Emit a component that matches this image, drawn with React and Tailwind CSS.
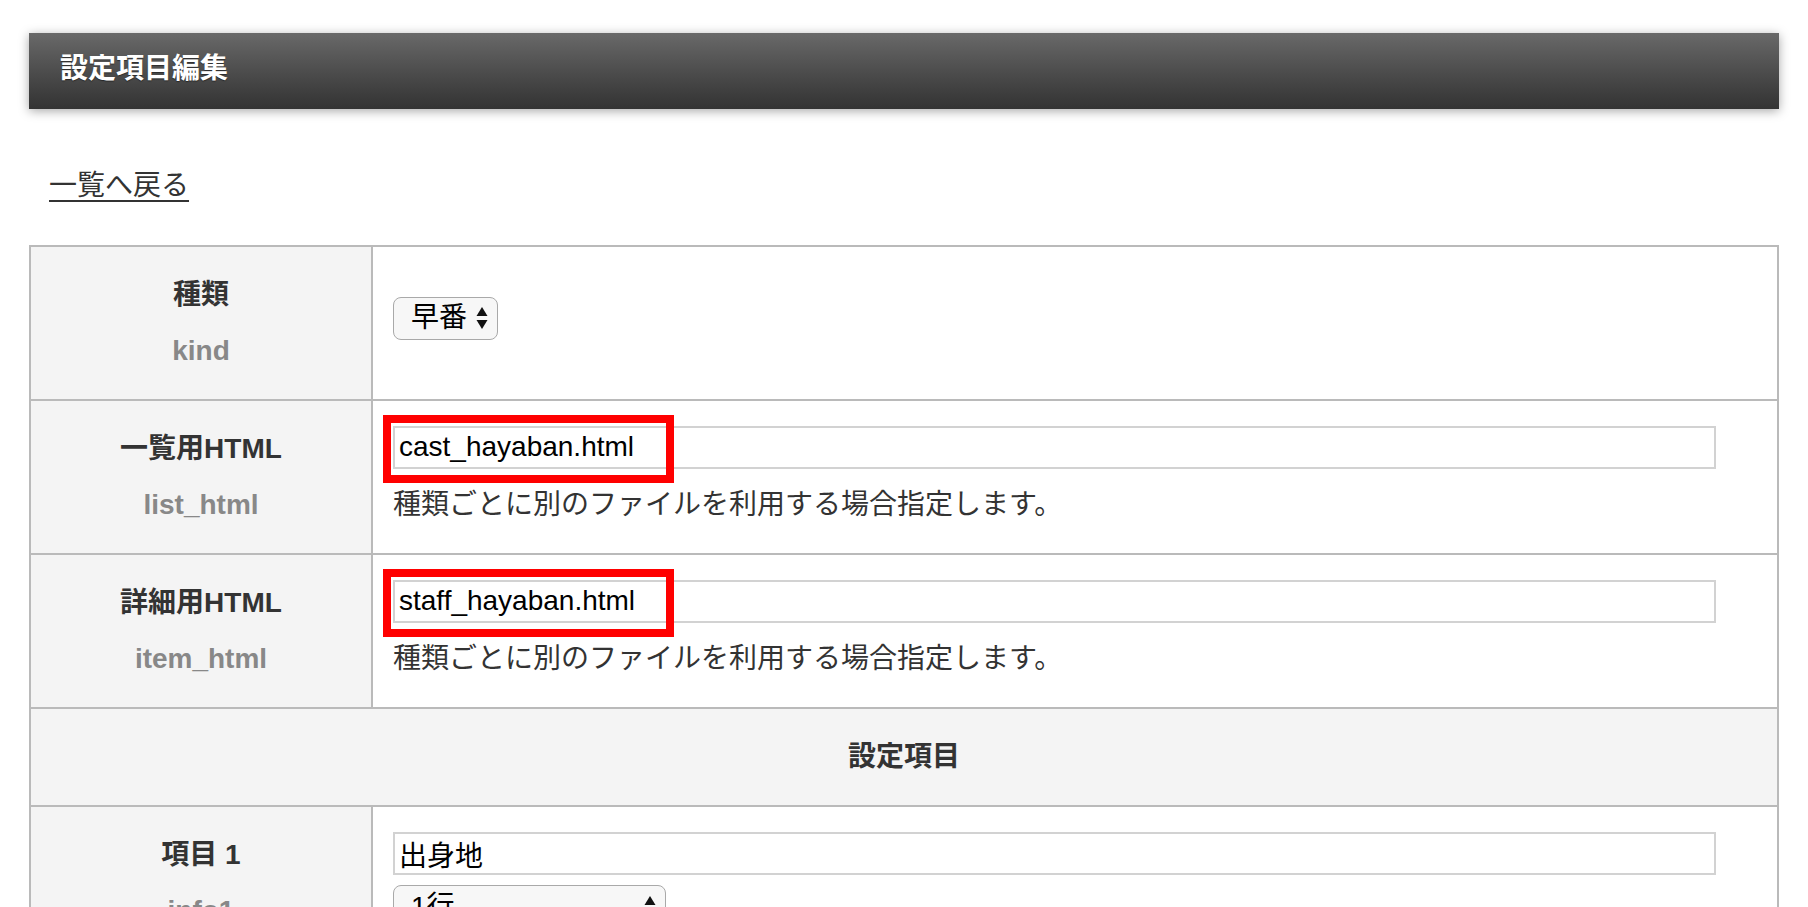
import React from 'react';

const Arrows = () => (
  <svg width="12" height="22" viewBox="0 0 12 22" className="shrink-0">
    <path d="M6 0 L11.5 9 L0.5 9 Z" fill="#111" />
    <path d="M6 22 L11.5 13 L0.5 13 Z" fill="#111" />
  </svg>
);

const FakeSelect = ({ value, width }) => (
  <div
    className={`inline-flex h-[43px] items-center justify-between rounded-[8px] border-[1.5px] border-[#a9a9a9] bg-[#f7f7f7] pl-[17px] pr-[9px] text-[28px] leading-none text-black ${width}`}
  >
    <span>{value}</span>
    <Arrows />
  </div>
);

const Label = ({ title, sub, top = false }) => (
  <td
    className={`w-[342px] border-2 border-[#bababa] bg-[#f4f4f4] py-[20px] text-center text-[28px] font-bold leading-[56px] ${top ? 'align-top' : 'align-middle'}`}
  >
    <div className="text-[#333]">{title}</div>
    <div className="text-[#888]">{sub}</div>
  </td>
);

const TextField = ({ value, marked = false }) => (
  <div className="relative w-[97%]">
    <input
      readOnly
      value={value}
      className="block h-[43px] w-full border-2 border-[#d2d2d2] bg-white px-[4px] text-[28px] text-black outline-none"
    />
    {/* red annotation frame */}
    {marked && (
      <div className="pointer-events-none absolute left-[-10px] top-[-11px] h-[68px] w-[291px] border-[8px] border-[#ff0000]" />
    )}
  </div>
);

const HelpText = () => (
  <p className="mt-[12px] text-[28px] leading-[48px] text-[#333]">
    種類ごとに別のファイルを利用する場合指定します。
  </p>
);

const cell = 'border-2 border-[#bababa] bg-white px-[20px] py-[24px] align-middle';

const App = () => {
  return (
    <div className="min-h-screen bg-white px-[29px] pt-[33px] font-['Liberation_Sans','Noto_Sans_CJK_JP',sans-serif] text-[#333]">
      {/* page title bar */}
      <div className="flex h-[76px] items-center bg-linear-to-b from-[#696969] to-[#333333] pb-[4px] pl-[31px] text-[28px] font-bold text-white shadow-[0_2px_10px_rgba(0,0,0,0.35)] [text-shadow:0_1px_1px_rgba(0,0,0,0.45)]">
        設定項目編集
      </div>

      <div className="mt-[56px] px-[20px] text-[28px] leading-[42px]">
        <a href="#" className="text-[#333] underline underline-offset-[5px]">
          一覧へ戻る
        </a>
      </div>

      <table className="mt-[38px] w-full border-collapse border-2 border-[#bababa]">
        <tbody>
          <tr>
            <Label title="種類" sub="kind" />
            <td className="border-2 border-[#bababa] bg-white px-[20px] pt-[18px] pb-[28px] align-middle">
              <FakeSelect value="早番" width="w-[105px]" />
            </td>
          </tr>
          <tr>
            <Label title="一覧用HTML" sub="list_html" />
            <td className={cell}>
              <TextField value="cast_hayaban.html" marked />
              <HelpText />
            </td>
          </tr>
          <tr>
            <Label title="詳細用HTML" sub="item_html" />
            <td className={cell}>
              <TextField value="staff_hayaban.html" marked />
              <HelpText />
            </td>
          </tr>
          <tr>
            <td
              colSpan={2}
              className="border-2 border-[#bababa] bg-[#f4f4f4] py-[20px] text-center text-[28px] font-bold leading-[56px] text-[#333]"
            >
              設定項目
            </td>
          </tr>
          <tr>
            <Label title="項目 1" sub="info1" top />
            <td className="border-2 border-[#bababa] bg-white px-[20px] pt-[25px] pb-[24px] align-top">
              <TextField value="出身地" />
              <div className="mt-[10px]">
                <FakeSelect value="1行" width="w-[273px]" />
              </div>
              <div className="mt-[10px]">
                <TextField value="" />
              </div>
            </td>
          </tr>
        </tbody>
      </table>
    </div>
  );
};

export default App;
